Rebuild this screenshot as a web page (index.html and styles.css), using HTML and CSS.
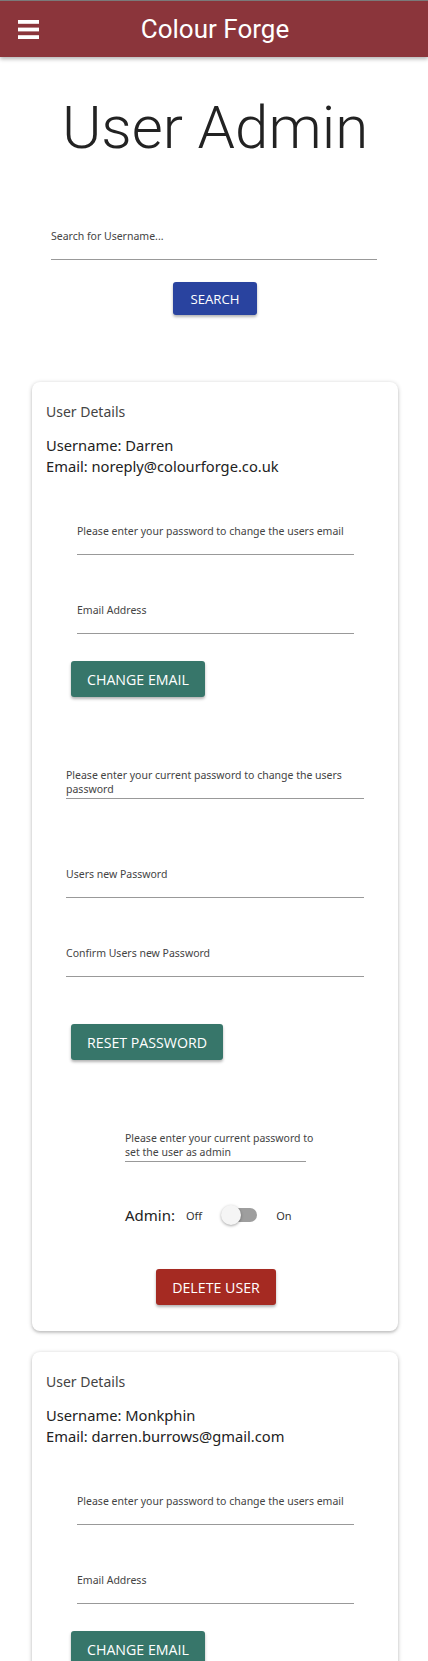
FILE: index.html
```html
<!DOCTYPE html>
<html lang="en">
<head>
<meta charset="utf-8">
<title>Colour Forge - User Admin</title>
<link rel="stylesheet" href="styles.css">
</head>
<body>
<header class="topbar">
  <button class="menu-btn" aria-label="Menu">
    <svg width="21" height="20" viewBox="0 0 21 20"><rect x="0" y="0" width="21" height="3.8" fill="#fff"/><rect x="0" y="7.6" width="21" height="3.8" fill="#fff"/><rect x="0" y="15.2" width="21" height="3.8" fill="#fff"/></svg>
  </button>
  <div class="brand">Colour Forge</div>
  <div></div>
</header>

<main>
  <h1 class="page-title">User Admin</h1>

  <section class="search">
    <div class="field search-field">
      <label>Search for Username...</label>
      <input type="text">
    </div>
    <button class="btn btn-blue">SEARCH</button>
  </section>

  <section class="card">
    <div class="card-title">User Details</div>
    <div class="info">
      <div>Username: Darren</div>
      <div>Email: noreply@colourforge.co.uk</div>
    </div>
    <div class="field email-field f1">
      <label>Please enter your password to change the users email</label>
      <input type="password">
    </div>
    <div class="field email-field f2">
      <label>Email Address</label>
      <input type="text">
    </div>
    <button class="btn btn-green btn-change">CHANGE EMAIL</button>

    <div class="field pw-field p1">
      <label>Please enter your current password to change the users password</label>
      <input type="password">
    </div>
    <div class="field pw-field p2">
      <label>Users new Password</label>
      <input type="password">
    </div>
    <div class="field pw-field p3">
      <label>Confirm Users new Password</label>
      <input type="password">
    </div>
    <button class="btn btn-green btn-reset">RESET PASSWORD</button>

    <div class="field admin-field">
      <label>Please enter your current password to set the user as admin</label>
      <input type="password">
    </div>
    <div class="admin-row">
      <span class="admin-label">Admin:</span>
      <span class="sw-text sw-off">Off</span>
      <span class="switch"><span class="track"></span><span class="thumb"></span></span>
      <span class="sw-text">On</span>
    </div>
    <div class="delete-wrap">
      <button class="btn btn-red">DELETE USER</button>
    </div>
  </section>

  <section class="card">
    <div class="card-title">User Details</div>
    <div class="info">
      <div>Username: Monkphin</div>
      <div>Email: darren.burrows@gmail.com</div>
    </div>
    <div class="field email-field f1">
      <label>Please enter your password to change the users email</label>
      <input type="password">
    </div>
    <div class="field email-field f2">
      <label>Email Address</label>
      <input type="text">
    </div>
    <button class="btn btn-green btn-change">CHANGE EMAIL</button>

    <div class="field pw-field p1">
      <label>Please enter your current password to change the users password</label>
      <input type="password">
    </div>
    <div class="field pw-field p2">
      <label>Users new Password</label>
      <input type="password">
    </div>
    <div class="field pw-field p3">
      <label>Confirm Users new Password</label>
      <input type="password">
    </div>
    <button class="btn btn-green btn-reset">RESET PASSWORD</button>
  </section>
</main>
</body>
</html>
```

FILE: styles.css
```css
* { box-sizing: border-box; }

html, body {
  margin: 0;
  padding: 0;
  background: #fff;
}

body {
  font-family: "Noto Sans", "Open Sans", sans-serif;
  color: #222;
  overflow: hidden;
}

.topbar {
  height: 57px;
  border-top: 1px solid #7a7a7a;
  background: #8b353b;
  display: grid;
  grid-template-columns: 1fr auto 1fr;
  align-items: center;
  box-shadow: 0 2px 4px rgba(0,0,0,0.3);
  position: relative;
  z-index: 2;
}

.menu-btn {
  justify-self: start;
  margin-left: 18px;
  padding: 0;
  border: 0;
  background: none;
  display: flex;
  height: 20px;
  margin-top: 1px;
}

.brand {
  font-family: Roboto, sans-serif;
  font-size: 26px;
  color: #fff;
  line-height: 30px;
  padding-left: 2px;
}

main {
  padding-bottom: 40px;
}

.page-title {
  font-family: Roboto, sans-serif;
  font-weight: 300;
  font-size: 60px;
  line-height: 72px;
  text-align: center;
  margin: 35px 0 0 2px;
  color: #222;
}

.search {
  display: flex;
  flex-direction: column;
  align-items: center;
  margin-top: 65px;
  margin-bottom: 67px;
  padding-left: 2px;
}

.field {
  position: relative;
}

.field label {
  position: absolute;
  left: 0;
  top: 0;
  font-size: 10.5px;
  line-height: 14px;
  color: #444;
  pointer-events: none;
}

.field input {
  display: block;
  width: 100%;
  height: 31px;
  border: 0;
  border-bottom: 1px solid #999;
  background: transparent;
  padding: 0;
  outline: none;
}

.search-field {
  width: 326px;
  margin-right: 2px;
}

.btn {
  border: 0;
  border-radius: 3px;
  color: #fff;
  font-family: "Open Sans", "Noto Sans", sans-serif;
  font-size: 14.2px;
  height: 36px;
  padding: 0 16px;
  box-shadow: 0 2px 3px rgba(0,0,0,0.3);
  letter-spacing: 0;
}

.btn-blue {
  background: #29439f;
  height: 33px;
  font-size: 13.2px;
  padding: 0 17px;
  margin-top: 22px;
}

.btn-green {
  background: #37766a;
  display: block;
  margin-left: 25px;
}

.btn-red {
  background: #a52a22;
}

.card {
  margin: 0 30px 21px 32px;
  background: #fff;
  border-radius: 8px;
  box-shadow: 0 1px 4px rgba(0,0,0,0.25), 0 2px 2px rgba(0,0,0,0.08);
  padding: 20px 14px 26px;
}

.card-title {
  font-size: 14px;
  line-height: 20px;
  color: #444;
}

.info {
  margin-top: 13px;
  font-size: 14.7px;
  line-height: 21px;
  color: #222;
}

.email-field {
  margin-left: 31px;
  width: 277px;
}

.f1 { margin-top: 47px; }
.f2 { margin-top: 48px; }

.btn-change { margin-top: 27px; }

.pw-field {
  margin-left: 20px;
  width: 298px;
}

.p1 { margin-top: 71px; }
.p2 { margin-top: 68px; }
.p3 { margin-top: 48px; }

.btn-reset { margin-top: 47px; }

.admin-field {
  margin-left: 79px;
  width: 181px;
  margin-top: 71px;
}

.admin-field label {
  width: 196px;
}

.admin-row {
  display: flex;
  align-items: center;
  margin-left: 79px;
  margin-top: 42px;
  height: 22px;
}

.admin-label {
  font-size: 15px;
  color: #222;
}

.sw-text {
  font-size: 11px;
  color: #333;
}

.sw-off {
  margin-left: 11px;
}

.switch {
  position: relative;
  width: 36px;
  height: 20px;
  margin-left: 19px;
  margin-right: 19px;
}

.track {
  position: absolute;
  left: 2px;
  top: 3px;
  width: 34px;
  height: 14px;
  border-radius: 7px;
  background: #9e9e9e;
}

.thumb {
  position: absolute;
  left: 0;
  top: 0;
  width: 20px;
  height: 20px;
  border-radius: 50%;
  background: #f5f5f5;
  box-shadow: 0 1px 3px rgba(0,0,0,0.35);
}

.delete-wrap {
  display: flex;
  justify-content: center;
  margin-top: 43px;
  padding-left: 2px;
}
```
